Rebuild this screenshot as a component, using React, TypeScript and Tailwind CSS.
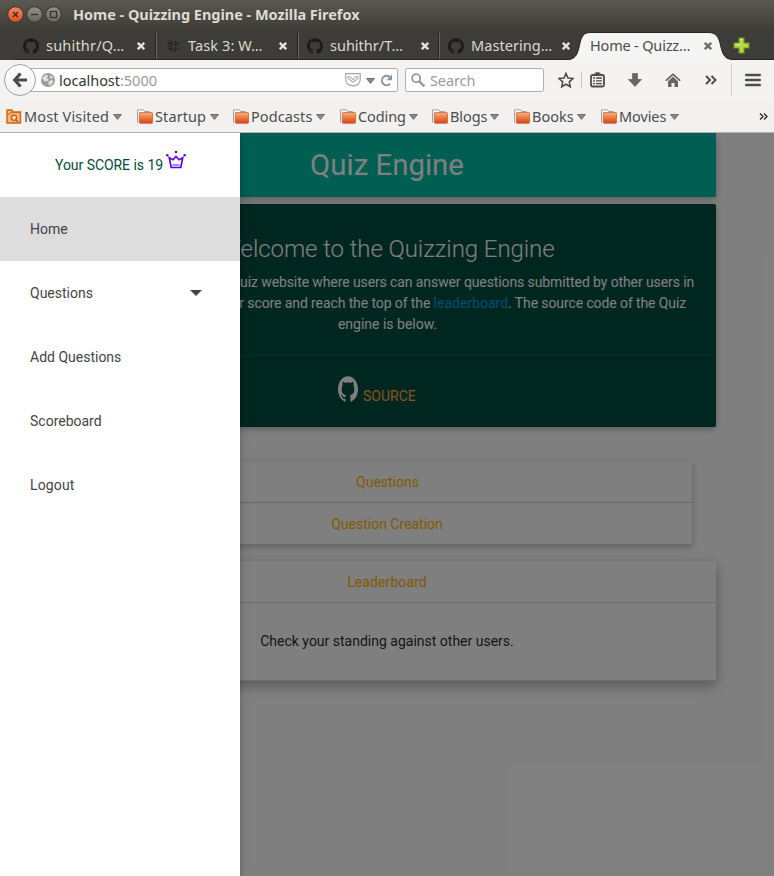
import React from "react";

const GITHUB =
  "M12 .297c-6.63 0-12 5.373-12 12 0 5.303 3.438 9.8 8.205 11.385.6.113.82-.258.82-.577 0-.285-.01-1.04-.015-2.04-3.338.724-4.042-1.61-4.042-1.61C4.422 18.07 3.633 17.7 3.633 17.7c-1.087-.744.084-.729.084-.729 1.205.084 1.838 1.236 1.838 1.236 1.07 1.835 2.809 1.305 3.495.998.108-.776.417-1.305.76-1.605-2.665-.3-5.466-1.332-5.466-5.93 0-1.31.465-2.38 1.235-3.22-.135-.303-.54-1.523.105-3.176 0 0 1.005-.322 3.3 1.23.96-.267 1.98-.399 3-.405 1.02.006 2.04.138 3 .405 2.28-1.552 3.285-1.23 3.285-1.23.645 1.653.24 2.873.12 3.176.765.84 1.23 1.91 1.23 3.22 0 4.61-2.805 5.625-5.475 5.92.42.36.81 1.096.81 2.22 0 1.606-.015 2.896-.015 3.286 0 .315.21.69.825.57C20.565 22.092 24 17.592 24 12.297c0-6.627-5.373-12-12-12";

function GithubMark({ className }: { className: string }) {
  return (
    <svg viewBox="0 0 24 24" preserveAspectRatio="none" className={className} fill="currentColor">
      <path d={GITHUB} />
    </svg>
  );
}

function CloseX({ className }: { className: string }) {
  return (
    <svg viewBox="0 0 8 8" className={`size-2 shrink-0 ${className}`} stroke="currentColor" strokeWidth="2.4">
      <path d="M.8.8l6.4 6.4M7.2.8L.8 7.2" />
    </svg>
  );
}

function Caret() {
  return (
    <svg viewBox="0 0 9 6" className="mt-0.5 h-1.5 w-[9px] shrink-0">
      <path d="M.6.5h7.8L4.5 5.4z" fill="#8b8b88" stroke="#646462" strokeWidth=".9" />
    </svg>
  );
}

function TitleBar() {
  return (
    <div className="flex h-[30px] items-center bg-linear-to-b from-[#5b584f] to-[#3e3d39] pl-[7px]">
      <svg viewBox="0 0 56 18" className="h-[18px] w-14 shrink-0" fill="none">
        <defs>
          <linearGradient id="close" x1="0" y1="0" x2="0" y2="1">
            <stop stopColor="#f58a66" />
            <stop offset="1" stopColor="#e04f1c" />
          </linearGradient>
          <linearGradient id="knob" x1="0" y1="0" x2="0" y2="1">
            <stop stopColor="#93918a" />
            <stop offset="1" stopColor="#65635c" />
          </linearGradient>
        </defs>
        <circle cx="8.5" cy="8.5" r="7.8" fill="url(#close)" stroke="#35332e" />
        <path d="M6 6l5 5M11 6l-5 5" stroke="#3b2a20" strokeWidth="1.4" />
        <circle cx="27.5" cy="8.5" r="7.8" fill="url(#knob)" stroke="#35332e" />
        <path d="M24 8.500h7" stroke="#33312c" strokeWidth="1.3" />
        <circle cx="46.5" cy="8.5" r="7.8" fill="url(#knob)" stroke="#35332e" />
        <rect x="43.5" y="5.5" width="6" height="6" stroke="#33312c" strokeWidth="1.2" />
      </svg>
      <span className="ml-[10px] text-[14.5px] font-bold tracking-[-0.03px] text-[#dfdbd2]">
        Home - Quizzing Engine - Mozilla Firefox
      </span>
    </div>
  );
}

function SplatIcon() {
  return (
    <svg viewBox="0 0 16 16" className="size-4 shrink-0" stroke="#22211f" strokeWidth="1.2" fill="none">
      <path d="M3 4l4 4M6 2.500l1.500 3.500M11 3L9.500 7M14 4.500l-4 3M2 8l3.500 1M13.500 11l-4-1.500M5 13l2.500-3M9.500 10.500l1 3.500M3 11l3-1" />
    </svg>
  );
}

const tabs = [
  { icon: "github", label: "suhithr/Q…", box: "w-[142px]", track: "tracking-[0.2px]" },
  { icon: "splat", label: "Task 3: W…", box: "w-[142px]", track: "tracking-[0.1px]" },
  { icon: "github", label: "suhithr/T…", box: "w-[141px]", track: "tracking-[0px]" },
  { icon: "github", label: "Mastering…", box: "w-[131px]", track: "tracking-[0.05px]" },
];

function TabStrip() {
  return (
    <div className="flex h-[30px] bg-[#3d3c38] pl-[15px] text-[14.5px]">
      {tabs.map((t, i) => (
        <div key={t.label} className={`relative flex items-center border-b border-[#262522] pl-2 pt-0.5 ${t.box}`}>
          {t.icon === "github" ? <GithubMark className="size-4 shrink-0 text-[#1b1b1a]" /> : <SplatIcon />}
          <span className={`ml-[7px] w-[91px] shrink-0 whitespace-nowrap text-[#dcd8cf] ${t.track}`}>{t.label}</span>
          <CloseX className="text-[#e4e1da]" />
          {i < 3 && <i className="absolute right-0 top-[3px] h-[26px] w-0.5 border-l border-r border-l-[#252421] border-r-[#6a6862]" />}
        </div>
      ))}
      <div className="relative flex w-[163px] items-center pl-[19px] pt-0.5">
        <svg viewBox="0 0 163 30" className="absolute left-0 top-0 h-[30px] w-[163px] overflow-visible">
          <path d="M-4 30C4 30 6.500 25 8.500 15C10.500 6 12.500 2.500 20 2.500H137C144.500 2.500 147.500 6 149.500 15C151.500 25 154 30 163 30Z" fill="#f5f5f4" />
          <path d="M-4 29.500C4 29.500 6.500 25 8.500 15C10.500 6 12.500 2.500 20 2.500H137C144.500 2.500 147.500 6 149.500 15C151.500 25 154 29.500 163 29.500" fill="none" stroke="#262522" strokeWidth="1" />
        </svg>
        <span className="relative w-[114px] shrink-0 whitespace-nowrap tracking-[-0.18px] text-[#4c4c4c]">Home - Quizz…</span>
        <CloseX className="relative text-[#6d6d6b]" />
      </div>
      <div className="flex grow items-center border-b border-[#262522] pt-0.5">
        <svg viewBox="0 0 17 17" className="-ml-px size-[17px]">
          <path d="M6 1h5v5h5v5h-5v5H6v-5H1V6h5z" fill="#b4d84b" stroke="#71931c" strokeWidth="1.2" />
          <path d="M7.200 2.500h2.500M2.500 7.300h5" stroke="#e2f2a2" strokeWidth="1" />
        </svg>
      </div>
    </div>
  );
}

function Toolbar() {
  return (
    <div className="flex h-10 items-center bg-[#f4f3f2] pl-1 text-[14.5px]">
      <div className="relative z-10 flex size-8 shrink-0 items-center justify-center rounded-full border border-[#95a3b1] bg-linear-to-b from-white to-[#f2f2f2]">
        <svg viewBox="0 0 16 16" className="size-4" fill="none" stroke="#4d4d4d" strokeWidth="3.200">
          <path d="M8.500 1.500L2.700 8l5.800 6.500M3 8h12" />
        </svg>
      </div>
      <div className="-ml-2 flex h-6 w-[370px] shrink-0 items-center rounded-r-xs border border-[#b1b0ae] bg-white pl-3">
        <svg viewBox="0 0 14 14" className="size-3.5 shrink-0">
          <circle cx="7" cy="7" r="7" fill="#9a9a9a" />
          <path d="M1 5l4-3.500 2 1-1 2.500 2 1-2 2.500-3-.5zM9 2l3 2-1 2-2-1zM7.500 8l4-1 1 2-3 3.500-2-1z" fill="#dedede" />
        </svg>
        <span className="ml-1 w-[286px] shrink-0 pt-0.5 tracking-[-0.03px] text-[#333]">
          localhost<span className="text-[#999]">:5000</span>
        </span>
        <svg viewBox="0 0 16 14" className="h-3.5 w-4 shrink-0" fill="none" stroke="#a5a5a5" strokeWidth="1.200">
          <path d="M.8.7h14.400v5.800c0 8.600-14.400 8.600-14.400 0z" />
          <path d="M4 4.500l4 3.500 4-3.500" strokeWidth="3.200" strokeLinecap="round" strokeLinejoin="round" />
          <path d="M4 4.500l4 3.500 4-3.500" stroke="#fff" strokeWidth="1.200" strokeLinecap="round" />
        </svg>
        <span className="ml-[5px] flex"><Caret /></span>
        <svg viewBox="0 0 13 13" className="ml-[5px] size-[13px] shrink-0" fill="none">
          <path d="M10 9.800A4.700 4.700 0 1 1 9.700 3" stroke="#8796a5" strokeWidth="2" />
          <path d="M12 .5v5.800H6.500z" fill="#8796a5" />
        </svg>
      </div>
      <div className="ml-[7px] flex h-6 w-[139px] shrink-0 items-center rounded-xs border border-[#b1b0ae] bg-white pl-[5px]">
        <svg viewBox="0 0 14 14" className="size-3.5 shrink-0" fill="none" stroke="#999">
          <circle cx="5.200" cy="5.200" r="4" strokeWidth="1.800" />
          <path d="M8.300 8.300l5 5" strokeWidth="2.400" />
        </svg>
        <span className="ml-[5px] pt-0.5 tracking-[-0.1px] text-[#9b9b9b]">Search</span>
      </div>
      <svg viewBox="0 0 16 16" className="ml-[14px] size-4 shrink-0" fill="none" stroke="#4d4d4d" strokeWidth="1.600">
        <path d="M8 1.500l2 4.500 5 .5-3.700 3.300 1 5L8 12.300l-4.300 2.500 1-5L1 6.500 6 6z" />
      </svg>
      <i className="ml-[7px] h-[18px] w-px bg-[#c3cad1]" />
      <svg viewBox="0 0 15 16" className="ml-[8px] h-4 w-[15px] shrink-0" fill="none" stroke="#4d4d4d">
        <rect x="1" y="3" width="13" height="11.500" rx="1.500" strokeWidth="1.800" />
        <path d="M4 2.200h7M5.500 1h4" strokeWidth="1.600" />
        <path d="M3 6h2M6 6h6M3 8.800h2M6 8.800h6M3 11.600h2M6 11.600h6" strokeWidth="1.300" />
      </svg>
      <svg viewBox="0 0 14 14" className="ml-[23px] size-3.5 shrink-0">
        <path d="M4.500.5h5v6h4L7 13.500.5 6.500h4z" fill="#666" stroke="#555" strokeWidth=".6" />
      </svg>
      <svg viewBox="0 0 16 15" className="ml-[23px] h-[15px] w-4 shrink-0">
        <path d="M.8 7.800L8 1.200l7.200 6.600" fill="none" stroke="#555" strokeWidth="1.500" />
        <path d="M3 8.200L8 3.600l5 4.600V14H9.500v-4h-3v4H3z" fill="#666" />
      </svg>
      <svg viewBox="0 0 12 10" className="ml-[24px] h-2.5 w-3 shrink-0" fill="none" stroke="#4d4d4d" strokeWidth="2">
        <path d="M1 1l4 4-4 4M6.500 1l4 4-4 4" />
      </svg>
      <i className="ml-[14px] h-8 w-px bg-[#c9ced3]" />
      <svg viewBox="0 0 16 14" className="ml-[13px] h-3.5 w-4 shrink-0" stroke="#4d4d4d" strokeWidth="2.600" strokeLinecap="round">
        <path d="M1.300 2h13.400M1.300 7h13.400M1.300 12h13.400" />
      </svg>
    </div>
  );
}

function FolderIcon() {
  return (
    <svg viewBox="0 0 16 15" className="h-[15px] w-4 shrink-0">
      <defs>
        <linearGradient id="folder" x1="0" y1="0" x2="0" y2="1">
          <stop stopColor="#f4b48a" />
          <stop offset=".5" stopColor="#e8793c" />
          <stop offset="1" stopColor="#d8431a" />
        </linearGradient>
      </defs>
      <path d="M.5 13.500V.8h6l1 1.700h5V5" fill="#fafafa" stroke="#a5a29d" />
      <rect x="2.300" y="3.500" width="13.200" height="10.800" rx=".8" fill="url(#folder)" stroke="#cf6230" strokeWidth=".8" />
    </svg>
  );
}

function MostVisitedIcon() {
  return (
    <svg viewBox="0 0 16 15" className="h-[15px] w-4 shrink-0">
      <path d="M1 14V1h5l1 2h7.500v11z" fill="#f3b57d" stroke="#cb650f" strokeWidth="1.400" />
      <path d="M1 5h3l1-1.500h9" stroke="#cb650f" fill="none" />
      <circle cx="8" cy="8.800" r="2.600" fill="#f8d3ae" stroke="#c55a08" strokeWidth="1.200" />
      <path d="M10 11l2 2" stroke="#c55a08" strokeWidth="1.500" />
    </svg>
  );
}

const bookmarks = [
  { label: "Most Visited", box: "w-[131px]", text: "w-[89px] ml-[2px]", track: "tracking-[0.15px]" },
  { label: "Startup", box: "w-[96px]", text: "w-[55px] ml-[2px]", track: "tracking-[0.1px]" },
  { label: "Podcasts", box: "w-[107px]", text: "w-[65px] ml-[2px]", track: "tracking-[0.1px]" },
  { label: "Coding", box: "w-[92px]", text: "w-[51px] ml-[2px]", track: "tracking-[-0.1px]" },
  { label: "Blogs", box: "w-[82px]", text: "w-[40px] ml-[2px]", track: "tracking-[-0.1px]" },
  { label: "Books", box: "w-[87px]", text: "w-[45px] ml-[2px]", track: "tracking-[0px]" },
  { label: "Movies", box: "w-[90px]", text: "w-[51px] ml-[2px]", track: "tracking-[-0.1px]" },
];

function BookmarksBar() {
  return (
    <div className="flex h-[33px] items-center border-b border-[#b5b1a8] bg-[#f2f1f0] pl-[6px] text-[14.5px] text-[#4c4c4c]">
      {bookmarks.map((b, i) => (
        <div key={b.label} className={`flex shrink-0 items-center ${b.box}`}>
          {i === 0 ? <MostVisitedIcon /> : <FolderIcon />}
          <span className={`shrink-0 whitespace-nowrap pt-0.5 ${b.text} ${b.track}`}>{b.label}</span>
          <Caret />
        </div>
      ))}
      <svg viewBox="0 0 9 7" className="ml-auto mr-[6px] h-[7px] w-[9px]" fill="none" stroke="#222" strokeWidth="1.300">
        <path d="M1 .5l3 3-3 3M5 .5l3 3-3 3" />
      </svg>
    </div>
  );
}

function Crown() {
  return (
    <svg viewBox="0 0 20 20" className="ml-[3px] mb-2.5 size-5" fill="none" stroke="#6200ea">
      <path d="M3.300 7.800l3.700 2L10 6.500l3 3.300 3.700-2-1.900 9.700H5.200z" strokeWidth="1.700" />
      <path d="M6.500 15h7" strokeWidth="1" />
      <g fill="#6200ea" stroke="none">
        <circle cx="10" cy="2" r="1.300" />
        <circle cx="1.300" cy="5.200" r="1.300" />
        <circle cx="18.700" cy="5.200" r="1.300" />
      </g>
    </svg>
  );
}

function SideNav() {
  const row = "flex h-16 items-center px-[30px]";
  return (
    <nav className="absolute left-0 top-0 h-full w-60 bg-white text-sm text-[#444] shadow-[0_2px_5px_0_rgba(0,0,0,0.16),0_2px_10px_0_rgba(0,0,0,0.12)]">
      <div className="flex h-16 items-center pl-[55px] tracking-[-0.05px] text-[#004d40]">
        Your SCORE is 19
        <Crown />
      </div>
      <div className={`${row} bg-[#ddd]`}>Home</div>
      <div className={`${row} justify-between`}>
        Questions
        <svg viewBox="0 0 12 6" className="mr-2 h-1.5 w-3">
          <path d="M0 0h12L6 6z" fill="#444" />
        </svg>
      </div>
      <div className={row}>Add Questions</div>
      <div className={row}>Scoreboard</div>
      <div className={`${row} tracking-[0.15px]`}>Logout</div>
    </nav>
  );
}

function Page() {
  return (
    <div className="mx-auto w-[658px] text-center text-sm leading-[21px]">
      <header className="h-16 bg-[#00bfa5] text-[29.4px] leading-[64px] text-white shadow-[0_2px_5px_0_rgba(0,0,0,0.16),0_2px_10px_0_rgba(0,0,0,0.12)]">
        Quiz Engine
      </header>
      <section className="mt-[7px] h-[223px] rounded-xs bg-[#004d40] text-white shadow-[0_2px_5px_0_rgba(0,0,0,0.16),0_2px_10px_0_rgba(0,0,0,0.12)]">
        <div className="h-[151px] px-5 pt-5">
          <h1 className="text-2xl font-light leading-[50px] tracking-[-0.08px]">Welcome to the Quizzing Engine</h1>
          <p className="-mt-0.5 whitespace-nowrap tracking-[-0.1px]">
            The Quizzing Engine is a quiz website where users can answer questions submitted by other users in
            <br />
            <span className="ml-[23px]">order</span> to increase your score and reach the top of the <span className="tracking-normal text-[#039be5]">leaderboard</span>. The source code of the Quiz
            <br />
            <span className="ml-px tracking-normal">engine is below.</span>
          </p>
        </div>
        <div className="flex h-[72px] items-start border-t border-[rgba(160,160,160,0.2)] pl-[280px] pt-5">
          <GithubMark className="h-[26px] w-5" />
          <span className="ml-[5px] mt-[10px] text-[#ffab40]">SOURCE</span>
        </div>
      </section>
      <section className="mx-6 mt-[34px] text-[#ffb300] shadow-[0_2px_5px_0_rgba(0,0,0,0.16),0_2px_10px_0_rgba(0,0,0,0.12)]">
        <div className="h-[42px] border-b border-[#ccc] bg-white pl-px leading-[42px]">Questions</div>
        <div className="h-[42px] border-b border-[#ddd] bg-white leading-[42px]">Question Creation</div>
      </section>
      <section className="mt-4 bg-white shadow-[0_5px_11px_0_rgba(0,0,0,0.18),0_4px_15px_0_rgba(0,0,0,0.15)]">
        <div className="h-[42px] border-b border-[#ddd] leading-[42px] tracking-[0.1px] text-[#ffb300]">Leaderboard</div>
        <div className="h-[78px] border-b border-[#ddd] leading-[77px] text-black/87">Check your standing against other users.</div>
      </section>
    </div>
  );
}

export default function App() {
  return (
    <div className="flex h-[876px] w-[774px] flex-col overflow-hidden bg-white">
      <div className="shrink-0 font-['Noto_Sans',sans-serif]">
        <TitleBar />
        <TabStrip />
        <Toolbar />
        <BookmarksBar />
      </div>
      <main className="relative grow overflow-hidden font-['Roboto',sans-serif]">
        <Page />
        <div className="absolute inset-0 bg-black/50" />
        <SideNav />
      </main>
    </div>
  );
}
